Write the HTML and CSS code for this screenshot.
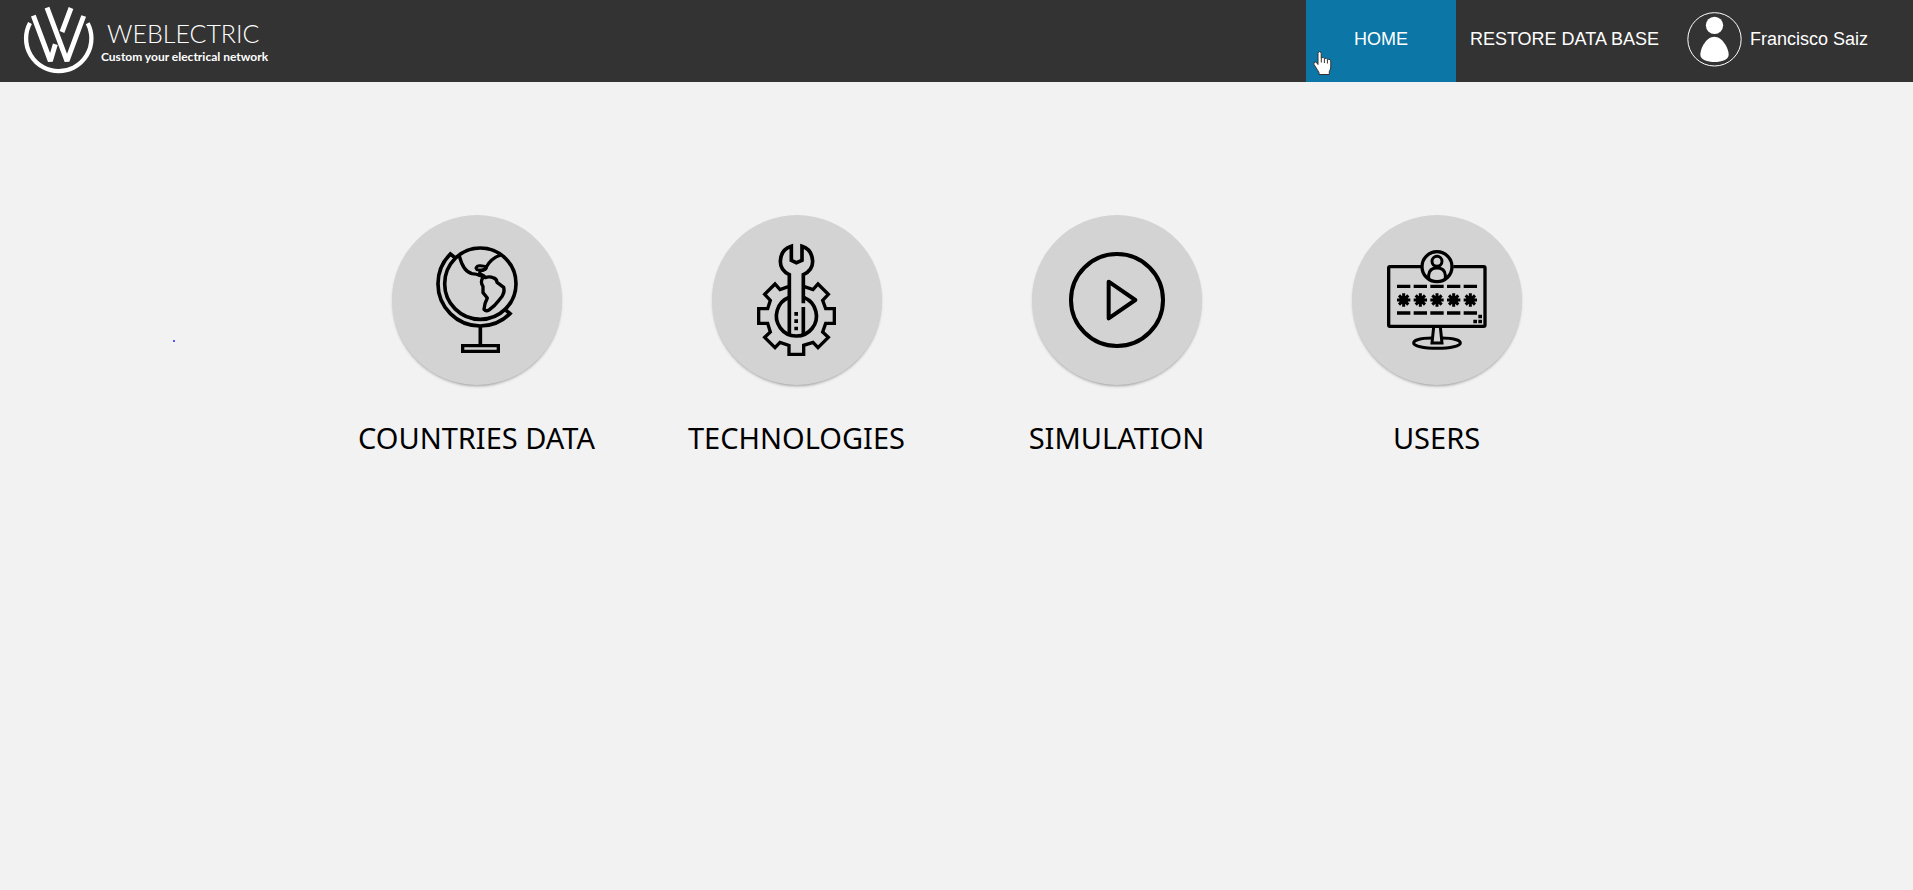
FILE: index.html
```html
<!DOCTYPE html>
<html lang="en">
<head>
<meta charset="utf-8">
<title>Weblectric</title>
<link rel="stylesheet" href="styles.css">
</head>
<body>
<header class="topbar">
  <a class="brand" href="#">
    <svg class="brand-mark" viewBox="66 12 219 216" fill="none" stroke="#fff" aria-hidden="true">
      <path d="M90 66A98 98 0 1 0 263 67" stroke-width="13"/>
      <path d="M100 44L151 180L166 130" stroke-width="15" stroke-linejoin="bevel"/>
      <path d="M141 20L201 180L251 45" stroke-width="15" stroke-linejoin="bevel"/>
      <path d="M213 21L186 93" stroke-width="15"/>
    </svg>
    <span class="brand-text">
      <span class="brand-name">WEBLECTRIC</span>
      <span class="brand-tag">Custom your electrical network</span>
    </span>
  </a>
  <nav class="nav">
    <a class="nav-link nav-active" href="#">HOME</a>
    <a class="nav-link" href="#">RESTORE DATA BASE</a>
    <a class="nav-link nav-user" href="#">
      <svg class="avatar" viewBox="261 35 165 165" aria-hidden="true">
        <circle cx="343.500" cy="117" r="80" fill="none" stroke="#fff" stroke-width="3"/>
        <circle cx="343.500" cy="75" r="26" fill="#fff"/>
        <path d="M343 109C366 109 386 142 386 163C386 192 301 192 301 163C301 142 320 109 343 109Z" fill="#fff"/>
      </svg>
      Francisco Saiz
    </a>
  </nav>
  <svg class="pointer" viewBox="0 0 19 25" aria-hidden="true">
    <path d="M5 2.500Q5 .7 6.600 .7T8.200 2.500V7Q10.500 5.500 11.300 7.500Q13.500 6.500 14.300 8.500Q17.800 7.500 17.800 11V16Q17.800 18 16.300 20.500V23.500H6V21.500L1 13.500Q0 11 2.500 11Q4 11.500 5 13.500Z" fill="#fff" stroke="#333" stroke-width="1"/>
    <path d="M8.300 7V11.500M11.400 8V12M14.400 9V12.500" stroke="#333" fill="none"/>
  </svg>
</header>

<main class="menu">
  <a class="tile" href="#">
    <svg class="disc" viewBox="36 30 510 510" fill="none" stroke="#000" stroke-width="11" aria-hidden="true">
      <circle cx="301" cy="236" r="107"/>
      <path d="M225 158L211 147A126 126 0 0 0 390 326L378 316"/>
      <path d="M301 362V420"/>
      <path d="M248 422H355V439H248Z" stroke-width="10"/>
      <path d="M238 153Q250 200 276 206Q290 207 301 212M362 150Q333 160 319 186Q319 192 311 195L302 197" stroke-width="10"/>
      <path d="M288 189Q291 181 301 182L315 184Q319 186 317 191L307 196L291 194ZM299 196V207" stroke-width="9"/>
      <path d="M301 207L312 213L316 218Q328 213 341 219Q350 221 351 232Q362 240 371 247Q375 260 367 273L357 286Q344 304 327 315Q318 320 312 313L315 296L322 279L309 263V244Q300 231 308 219Z" stroke-width="10" stroke-linejoin="round"/>
    </svg>
    <span class="tile-name">COUNTRIES DATA</span>
  </a>
  <a class="tile" href="#">
    <svg class="disc" viewBox="36 30 510 510" fill="none" stroke="#000" stroke-width="10" aria-hidden="true">
      <path d="M268 390V209Q241 197 241 169Q242 134 274 124V166L289 173L306 166V124Q336 133 338 169Q338 197 310 209V295M310 306V390" stroke-width="11"/>
      <path d="M265 245L240 254L225 237L194 268L211 286L203 311H176V355H203L211 381L194 397L225 428L240 412L267 421V448H311V421L339 412L354 428L385 397L368 381L377 355H403V311H377L368 286L385 268L354 237L339 254L313 245"/>
      <path d="M268 277A60 60 0 1 0 313 278" stroke-width="11"/>
      <path d="M283 321H294V332H283ZM283 343H294V354H283ZM283 365H294V376H283Z" fill="#000" stroke="none"/>
    </svg>
    <span class="tile-name">TECHNOLOGIES</span>
  </a>
  <a class="tile" href="#">
    <svg class="disc" viewBox="36 30 510 510" fill="none" stroke="#000" stroke-width="12" stroke-linejoin="round" aria-hidden="true">
      <circle cx="291" cy="285" r="138"/>
      <path d="M266 230L346 285L266 340Z"/>
    </svg>
    <span class="tile-name">SIMULATION</span>
  </a>
  <a class="tile" href="#">
    <svg class="disc" viewBox="36 30 510 510" fill="none" stroke="#000" stroke-width="10" aria-hidden="true">
      <defs>
        <g id="star" stroke-width="9"><circle r="13" fill="#000" stroke="none"/><path d="M0 -20V20M-20 0H20M-14 -14L14 14M14 -14L-14 14"/></g>
      </defs>
      <path d="M243 185H150Q146 185 146 189V360Q146 364 150 364H431Q435 364 435 360V189Q435 185 431 185H340"/>
      <circle cx="291" cy="185" r="45"/>
      <circle cx="291" cy="169" r="15" stroke-width="9"/>
      <path d="M266 221V210Q268 189 291 189Q314 189 316 210V221" stroke-width="9"/>
      <path d="M171 244H411M171 324H411" stroke-dasharray="40 10"/>
      <use href="#star" x="191" y="285"/><use href="#star" x="241" y="285"/><use href="#star" x="291" y="285"/><use href="#star" x="341" y="285"/><use href="#star" x="391" y="285"/>
      <path d="M415 329H426V340H415ZM415 344H426V355H415ZM400 344H411V355H400Z" fill="#000" stroke="none"/>
      <path d="M281 366L276 414H306L301 366" stroke-width="9"/>
      <path d="M276 399C240 399 221 406 221 414C221 423 250 430 291 430S361 423 361 414C361 406 340 399 305 399" stroke-width="9"/>
    </svg>
    <span class="tile-name">USERS</span>
  </a>
</main>
<span class="speck"></span>
</body>
</html>
```
FILE: styles.css
```css
* { box-sizing: border-box; }

body {
  margin: 0;
  background: #f2f2f2;
  font-family: "Liberation Sans", Arial, sans-serif;
}

a { text-decoration: none; color: inherit; }

.topbar {
  position: relative;
  display: flex;
  justify-content: space-between;
  height: 82px;
  background: #333;
  color: #fff;
}

.brand {
  display: flex;
  gap: 6px;
  padding: 5px 0 0 22px;
}

.brand-mark { width: 73px; height: 72px; }

.brand-text {
  display: flex;
  flex-direction: column;
  padding-top: 12px;
}

.brand-name {
  padding-left: 6px;
  font-family: Lato, sans-serif;
  font-size: 25px;
  font-weight: 300;
  line-height: 32px;
}

.brand-tag {
  font-family: Lato, sans-serif;
  font-size: 12px;
  font-weight: 700;
  line-height: 16px;
}

.nav {
  display: flex;
  padding-right: 31px;
}

.nav-link {
  display: flex;
  align-items: center;
  padding: 0 14px 3px;
  font-size: 18px;
}

.nav-active {
  justify-content: center;
  width: 150px;
  background: #0c76a6;
}

.nav-user { gap: 8px; }

.avatar { width: 55px; height: 55px; }

.pointer {
  position: absolute;
  left: 68.620%;
  top: 51px;
  width: 19px;
  height: 25px;
}

.menu {
  display: grid;
  grid-template-columns: repeat(4, 1fr);
  max-width: 1280px;
  margin: 0 auto;
  padding-top: 133px;
}

.tile {
  display: flex;
  flex-direction: column;
  align-items: center;
  gap: 33px;
  color: #000;
}

.disc {
  width: 170px;
  height: 170px;
  border-radius: 50%;
  background: #d3d3d3;
  box-shadow: 0 2px 3px -1px rgba(0, 0, 0, 0.35);
}

.tile-name {
  font-family: "Noto Sans", sans-serif;
  font-size: 29px;
  line-height: 40px;
}

.speck {
  position: absolute;
  left: 173px;
  top: 340px;
  width: 2px;
  height: 2px;
  border-radius: 50%;
  background: #22f;
}
```
